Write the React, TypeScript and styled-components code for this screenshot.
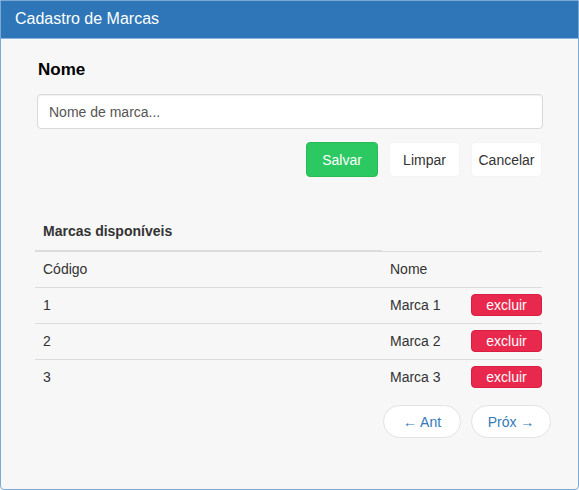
import React from "react";
import styled, { createGlobalStyle } from "styled-components";

const Global = createGlobalStyle`
  html, body { margin: 0; padding: 0; background: #ffffff; }
  body { font-family: "Liberation Sans", Arial, Helvetica, sans-serif; font-size: 14px; color: #333; }
  * { box-sizing: border-box; }
`;

const Panel = styled.div`
  width: 579px;
  height: 490px;
  border: 1px solid #7aa9d6;
  border-radius: 0 0 4px 4px;
  background: #f7f7f7;
  display: flex;
  flex-direction: column;
  overflow: hidden;
`;

const Heading = styled.div`
  height: 39px;
  margin: -1px -1px 0 -1px;
  background: #2e76b7;
  border-bottom: 1px solid #8bb5dc;
  color: #fff;
  font-size: 16px;
  line-height: 38px;
  padding: 0 15px;
`;

const Body = styled.div`
  padding: 20px 36px 0 34px;
  display: flex;
  flex-direction: column;
`;

const Label = styled.label`
  font-size: 17px;
  font-weight: bold;
  color: #000;
  line-height: 21px;
  margin-left: 3px;
`;

const Input = styled.input`
  margin: 14px 0 0 2px;
  height: 35px;
  width: 506px;
  border: 1px solid #d9d9d9;
  border-radius: 4px;
  background: #fff;
  padding: 0 11px;
  font-family: inherit;
  font-size: 14px;
  color: #555;
  box-shadow: inset 0 1px 1px rgba(0,0,0,0.06);
  &::placeholder { color: #555; }
`;

const Actions = styled.div`
  margin-top: 13px;
  display: flex;
  justify-content: flex-end;
  gap: 11px;
`;

const Btn = styled.button<{ $primary?: boolean; $w: number }>`
  height: 35px;
  width: ${(p) => p.$w}px;
  border-radius: 4px;
  font-family: inherit;
  font-size: 14px;
  padding: 0;
  border: 1px solid ${(p) => (p.$primary ? "#29b955" : "#f4f4f4")};
  background: ${(p) => (p.$primary ? "#2cc862" : "#fff")};
  color: ${(p) => (p.$primary ? "#fff" : "#333")};
`;

const Table = styled.table`
  margin-top: 36px;
  width: 507px;
  border-collapse: collapse;
  font-size: 14px;
  color: #333;
`;

const Th = styled.th`
  text-align: left;
  font-weight: bold;
  padding: 8px 8px 9px;
  line-height: 20px;
  border-bottom: 2px solid #dcdcdc;
`;

const Td = styled.td<{ $w?: number; $btn?: boolean }>`
  padding: ${(p) => (p.$btn ? "0 0 0 8px" : "0 8px")};
  height: 36px;
  line-height: 20px;
  border-top: 1px solid #dcdcdc;
  width: ${(p) => (p.$w ? `${p.$w}px` : "auto")};
  vertical-align: middle;
`;

const Danger = styled.button`
  width: 71px;
  height: 22px;
  border-radius: 4px;
  border: 1px solid #d81f42;
  background: #e8284d;
  color: #fff;
  font-family: inherit;
  font-size: 14px;
  line-height: 18px;
  padding: 0;
  display: block;
  margin-left: auto;
`;

const Pager = styled.div`
  margin-top: 10px;
  display: flex;
  justify-content: flex-end;
  gap: 10px;
  margin-right: -9px;
`;

const PageBtn = styled.button<{ $w: number }>`
  width: ${(p) => p.$w}px;
  height: 33px;
  border-radius: 17px;
  border: 1px solid #e2e2e2;
  background: #fff;
  color: #337ab7;
  font-family: inherit;
  font-size: 14px;
  padding: 0;
`;

const rows = [
  { id: 1, nome: "Marca 1" },
  { id: 2, nome: "Marca 2" },
  { id: 3, nome: "Marca 3" },
];

export default function App() {
  return (
    <>
      <Global />
      <Panel>
        <Heading>Cadastro de Marcas</Heading>
        <Body>
          <Label>Nome</Label>
          <Input placeholder="Nome de marca..." />
          <Actions>
            <Btn $primary $w={72}>Salvar</Btn>
            <Btn $w={71}>Limpar</Btn>
            <Btn $w={71}>Cancelar</Btn>
          </Actions>
          <Table>
            <thead>
              <tr>
                <Th>Marcas disponíveis</Th>
              </tr>
            </thead>
            <tbody>
              <tr>
                <Td $w={347}>Código</Td>
                <Td>Nome</Td>
                <Td $btn $w={80}></Td>
              </tr>
              {rows.map((r) => (
                <tr key={r.id}>
                  <Td $w={347}>{r.id}</Td>
                  <Td>{r.nome}</Td>
                  <Td $btn $w={80}>
                    <Danger>excluir</Danger>
                  </Td>
                </tr>
              ))}
            </tbody>
          </Table>
          <Pager>
            <PageBtn $w={78}>← Ant</PageBtn>
            <PageBtn $w={80}>Próx →</PageBtn>
          </Pager>
        </Body>
      </Panel>
    </>
  );
}
